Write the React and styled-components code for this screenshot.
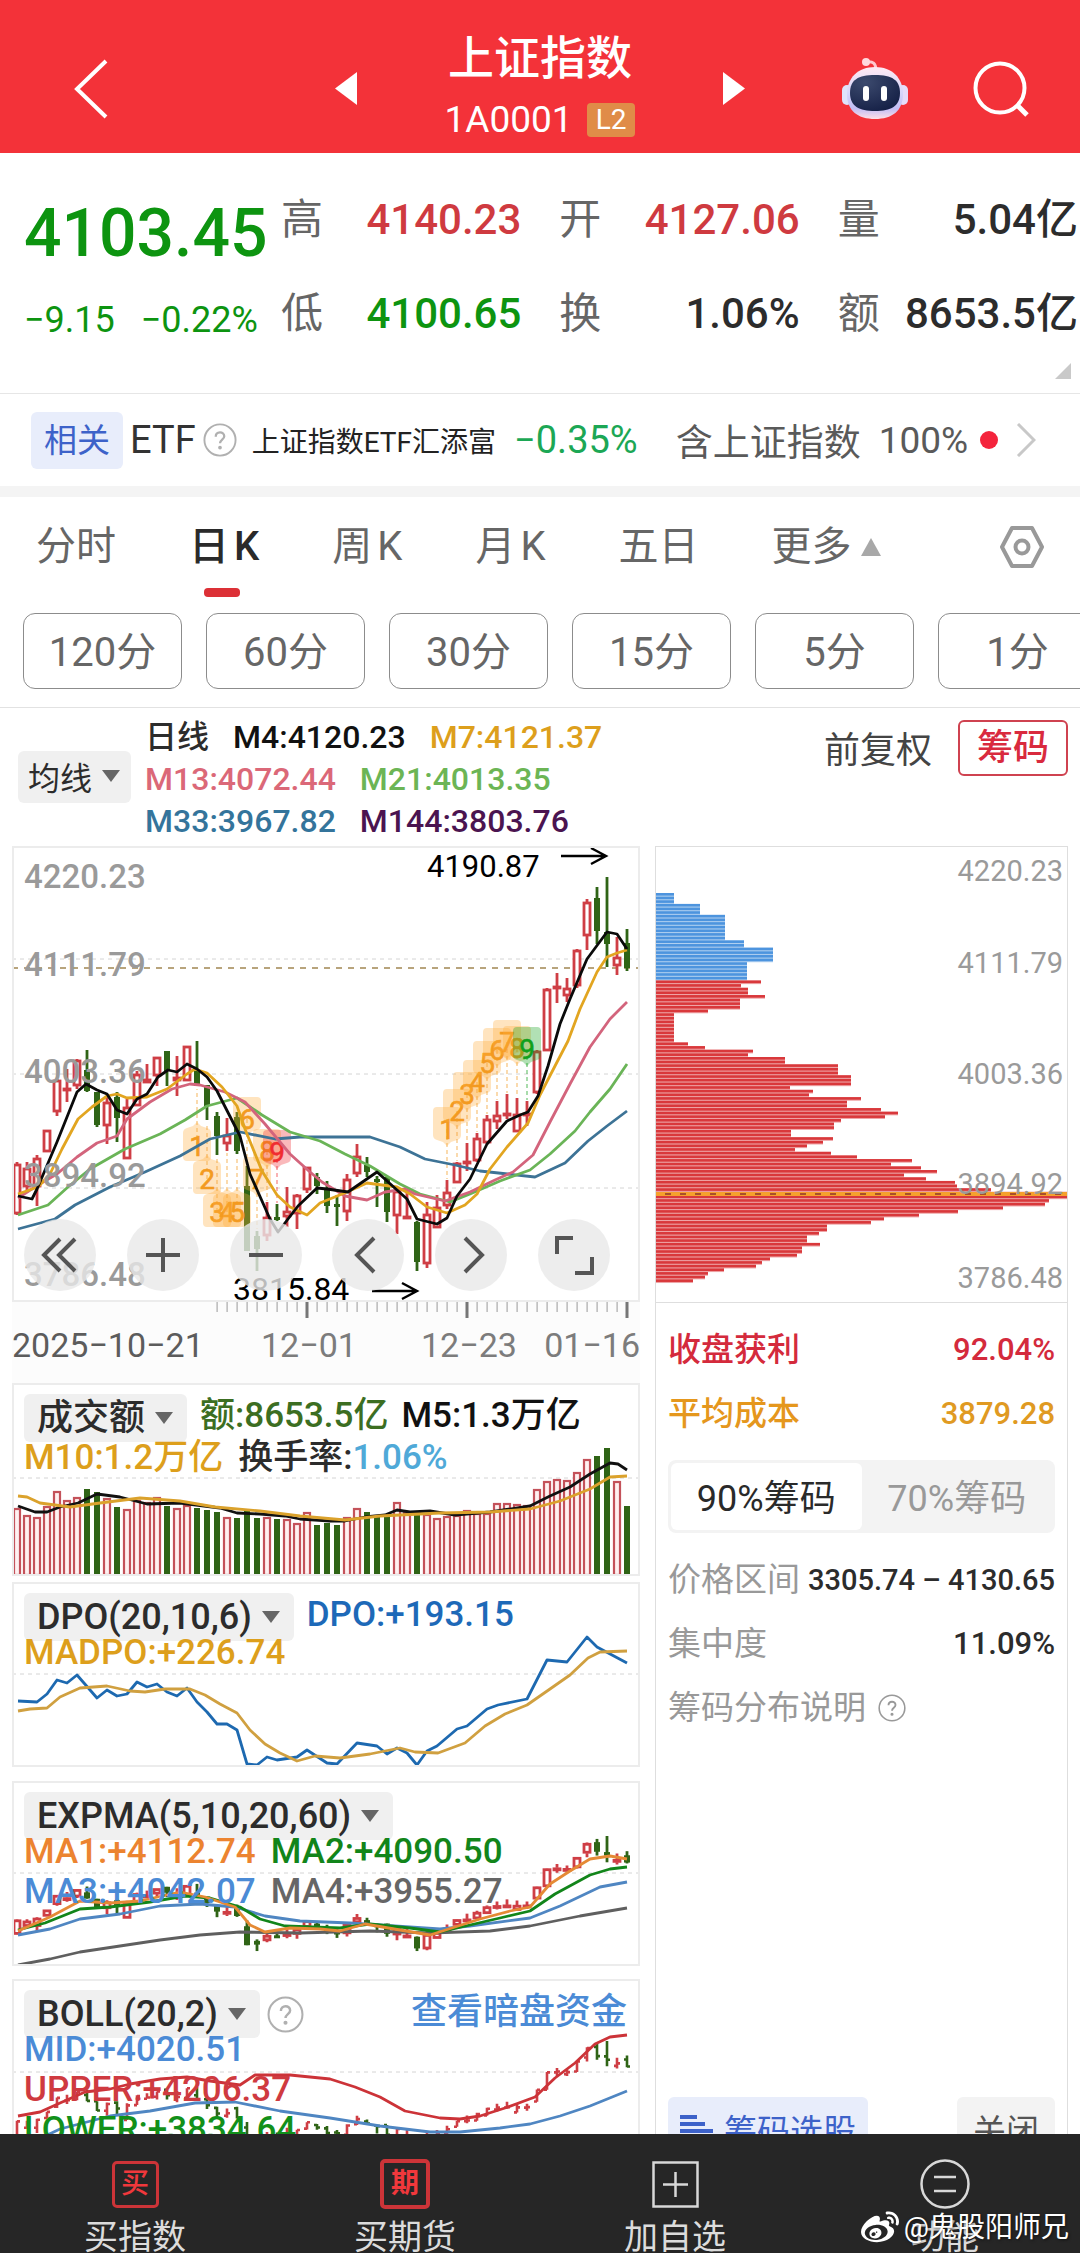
import React from "react";
import styled, { createGlobalStyle, css } from "styled-components";
import { FaWeibo } from "react-icons/fa";

const GlobalStyle = createGlobalStyle`
  *, *::before, *::after { box-sizing: border-box; }
  body {
    margin: 0;
    background: #fff;
    color: #333;
    font-family: Roboto, "Noto Sans CJK SC", sans-serif;
  }
  button {
    margin: 0;
    padding: 0;
    border: 0;
    background: none;
    color: inherit;
    font: inherit;
    cursor: pointer;
    white-space: nowrap;
  }
  a { color: inherit; text-decoration: none; }
  svg { display: block; }
  h1, p, dl, dt, dd { margin: 0; font-weight: inherit; }
`;

const RED = "#cf3a40";
const UP = "#cf3e45";
const DOWN = "#2f6416";

/* ---------- shell ---------- */

const Page = styled.div`
  position: relative;
  display: flex;
  flex-direction: column;
  height: 100vh;
  overflow: hidden;
`;

const Content = styled.main`
  flex: 1;
  min-height: 0;
  overflow: hidden;
`;

/* ---------- header ---------- */

const Header = styled.header`
  flex: none;
  display: grid;
  grid-template-columns: 1fr auto 1fr;
  align-items: center;
  height: 153px;
  padding: 26px 50px 2px;
  background: #f33239;
  color: #fff;
`;

const Back = styled.button`
  justify-self: start;
  padding-left: 22px;
`;

const Switcher = styled.div`
  display: flex;
  align-items: center;
  gap: 88px;
`;

const TitleBlock = styled.div`
  display: flex;
  flex-direction: column;
  align-items: center;
`;

const Title = styled.h1`
  font-size: 46px;
  line-height: 62px;
  font-weight: 500;
`;

const Code = styled.div`
  display: flex;
  align-items: center;
  gap: 14px;
  font-size: 37px;
  line-height: 62px;
`;

const Level = styled.span`
  padding: 0 9px;
  border-radius: 4px;
  background: #e08c48;
  font-size: 28px;
  line-height: 34px;
`;

const HeaderTools = styled.div`
  display: flex;
  justify-content: flex-end;
  align-items: center;
  gap: 65px;
`;

/* ---------- quote ---------- */

const Quote = styled.section`
  position: relative;
  display: flex;
  align-items: flex-start;
  padding: 20px 2px 20px 24px;
  border-bottom: 1px solid #e6e6e6;

  &::after {
    content: "";
    position: absolute;
    right: 9px;
    bottom: 14px;
    border-left: 16px solid transparent;
    border-bottom: 16px solid #c9c9c9;
  }
`;

const Last = styled.div`
  flex: none;
  width: 257px;
  padding-top: 28px;
  color: #0d9410;
`;

const Price = styled.p`
  font-size: 66px;
  line-height: 66px;
  font-weight: 500;
`;

const Change = styled.p`
  display: flex;
  gap: 26px;
  font-size: 36px;
  line-height: 106px;
`;

const Stats = styled.dl`
  flex: 1;
  display: grid;
  grid-template-columns: repeat(3, 1fr);
  column-gap: 38px;
`;

const Stat = styled.div`
  display: flex;
  justify-content: space-between;
  font-size: 42px;
  line-height: 94px;
  white-space: nowrap;

  dt { color: #666; }
  dd {
    color: ${(p) => p.$color || "#2c2c2c"};
    font-weight: 500;
  }
`;

/* ---------- related row ---------- */

const Related = styled.a`
  display: flex;
  align-items: center;
  height: 92px;
  padding: 0 38px 0 31px;
  white-space: nowrap;
`;

const RelatedTag = styled.span`
  margin-right: 7px;
  padding: 0 13px;
  border-radius: 6px;
  background: #e8edfb;
  color: #3d62c9;
  font-size: 33px;
  line-height: 57px;
`;

const Etf = styled.span`
  margin-right: 7px;
  font-size: 38px;
`;

const FundName = styled.span`
  margin: 0 18px 0 15px;
  color: #222;
  font-size: 28px;
`;

const FundChange = styled.span`
  margin-right: 38px;
  color: #1ca755;
  font-size: 38px;
`;

const Holding = styled.span`
  display: flex;
  align-items: center;
  gap: 18px;
  color: #5a5a5a;
  font-size: 37px;
`;

const Dot = styled.i`
  width: 18px;
  height: 18px;
  margin: 0 18px 0 12px;
  border-radius: 50%;
  background: #f4243c;
`;

const Band = styled.div`
  height: 11px;
  background: #f4f4f4;
`;

/* ---------- tabs ---------- */

const Tabs = styled.nav`
  display: flex;
  align-items: center;
  gap: 73px;
  height: 116px;
  padding: 0 36px 16px;
`;

const Tab = styled.button`
  position: relative;
  display: flex;
  align-items: center;
  gap: ${(p) => (p.$latin ? 5 : 9)}px;
  color: #666;
  font-size: 40px;
  line-height: 60px;

  ${(p) =>
    p.$active &&
    css`
      color: #2a2a2a;
      font-weight: 500;

      &::after {
        content: "";
        position: absolute;
        left: 50%;
        bottom: -20px;
        width: 36px;
        height: 9px;
        margin-left: -20px;
        border-radius: 4px;
        background: #dc3036;
      }
    `}
`;

const TabSettings = styled.button`
  margin-left: auto;
`;

const Periods = styled.div`
  display: flex;
  gap: 24px;
  padding: 0 0 18px 23px;
  overflow: hidden;
  border-bottom: 1px solid #e2e2e2;
`;

const Period = styled.button`
  flex: none;
  width: 159px;
  height: 76px;
  padding-bottom: 4px;
  border: 1px solid #8c8c8c;
  border-radius: 12px;
  color: #666;
  font-size: 40px;
`;

/* ---------- average lines legend ---------- */

const Averages = styled.section`
  display: flex;
  align-items: flex-start;
  height: 138px;
  padding: 8px 12px 0 18px;
`;

const Picker = styled.button`
  display: flex;
  align-items: center;
  gap: 10px;
  height: ${(p) => (p.$small ? 52 : 48)}px;
  padding: ${(p) => (p.$small ? "0 11px 2px 10px" : "0 14px 0 13px")};
  margin-top: ${(p) => (p.$small ? 35 : 0)}px;
  border-radius: 6px;
  background: #f0f0f0;
  color: #2c2c2c;
  font-size: ${(p) => (p.$small ? 32 : 36)}px;
`;

const AverageRows = styled.div`
  flex: 1;
  padding-left: 14px;
`;

const AverageRow = styled.div`
  display: flex;
  gap: 24px;
  font-size: 32px;
  font-weight: 500;
  line-height: 42px;
  white-space: nowrap;
`;

const Ink = styled.span`
  color: ${(p) => p.$c};
`;

const Adjust = styled.button`
  margin: 9px 26px 0 0;
  color: #444;
  font-size: 36px;
  line-height: 52px;
`;

const ChipToggle = styled.button`
  width: 110px;
  height: 56px;
  margin-top: 4px;
  border: 2px solid #cf4250;
  border-radius: 6px;
  color: #d92a3e;
  font-size: 36px;
  font-weight: 500;
  line-height: 50px;
`;

/* ---------- chart columns ---------- */

const Board = styled.div`
  display: grid;
  grid-template-columns: 628fr 413fr;
  gap: 15px;
  padding: 0 12px;
`;

const Column = styled.div`
  display: flex;
  flex-direction: column;
  min-width: 0;
`;

const Plot = styled.svg`
  width: 100%;
  height: auto;
  overflow: hidden;
`;

const MainChart = styled.section`
  position: relative;
  outline: 2px solid #ececec;
  outline-offset: -2px;
`;

const Controls = styled.div`
  position: absolute;
  left: 12px;
  right: 30px;
  bottom: 11px;
  display: flex;
  justify-content: space-between;
`;

const Round = styled.button`
  display: grid;
  place-items: center;
  width: 72px;
  height: 72px;
  border-radius: 50%;
  background: rgba(232, 232, 232, 0.8);
`;

const Ticks = styled.div`
  background: #fcfcfc;
`;

const Dates = styled.div`
  display: grid;
  grid-template-columns: 249fr 160fr 110fr 109fr;
  height: 65px;
  background: #fcfcfc;
  color: #7c7c7c;
  font-size: 34px;
  line-height: 54px;
  white-space: nowrap;

  span:first-child { color: #5c5c5c; }
  span:last-child { text-align: right; }
`;

const Indicator = styled.section`
  position: relative;
  margin-bottom: ${(p) => p.$gap}px;
  outline: 2px solid #ececec;
  outline-offset: -2px;
`;

const Legend = styled.div`
  position: absolute;
  left: 12px;
  right: 13px;
  top: 11px;
  font-size: 35px;
  font-weight: 500;
  white-space: nowrap;
`;

const LegendHead = styled.div`
  display: flex;
  align-items: flex-start;
  gap: 13px;
  line-height: 44px;
`;

const LegendRow = styled.div`
  display: flex;
  gap: 15px;
  margin-top: ${(p) => (p.$loose ? -4 : p.$first ? -8 : 0)}px;
  line-height: 40px;
`;

const DarkPool = styled.a`
  margin-left: auto;
  color: #4b8bd6;
  font-size: 36px;
`;

const HelpButton = styled.button`
  display: flex;
  align-self: center;
  margin-left: -6px;
`;

/* ---------- chip distribution ---------- */

const ChipPanel = styled(Column)`
  border: 1px solid #dedede;
`;

const ChipPlot = styled.div`
  border-bottom: 1px solid #dedede;
`;

const ChipInfo = styled.div`
  display: flex;
  flex-direction: column;
  flex: 1;
  padding: 15px 12px 0;
`;

const ChipRow = styled.div`
  display: flex;
  align-items: center;
  justify-content: space-between;
  color: ${(p) => p.$c || "#999"};
  font-size: 33px;
  font-weight: ${(p) => (p.$c ? 500 : 400)};
  line-height: 64px;
  white-space: nowrap;

  b {
    color: ${(p) => p.$v || "#2c2c2c"};
    font-size: ${(p) => (p.$tight ? 29 : 31)}px;
    font-weight: 500;
  }
`;

const Segments = styled.div`
  display: grid;
  grid-template-columns: 1fr 1fr;
  height: 73px;
  margin: 14px 0 15px;
  padding: 3px;
  border-radius: 8px;
  background: #f3f3f3;
`;

const Segment = styled.button`
  padding-bottom: 4px;
  border-radius: 6px;
  background: ${(p) => (p.$active ? "#fff" : "transparent")};
  color: ${(p) => (p.$active ? "#2a2a2a" : "#999")};
  font-size: 36px;
`;

const Explain = styled.button`
  display: flex;
  align-items: center;
  gap: 12px;
  color: #999;
  font-size: 33px;
  line-height: 64px;
`;

const ChipActions = styled.div`
  display: flex;
  justify-content: space-between;
  margin-top: auto;
`;

const ChipAction = styled.button`
  display: flex;
  align-items: center;
  gap: 11px;
  height: 66px;
  padding: 0 ${(p) => (p.$blue ? 12 : 16)}px 2px;
  border-radius: 6px;
  background: ${(p) => (p.$blue ? "#e8edfb" : "#f3f3f3")};
  color: ${(p) => (p.$blue ? "#3d62c9" : "#555")};
  font-size: 33px;
`;

/* ---------- bottom bar ---------- */

const BottomBar = styled.nav`
  flex: none;
  display: grid;
  grid-template-columns: repeat(4, 1fr);
  height: 119px;
  padding-top: 25px;
  overflow: hidden;
  background: #262626;
`;

const BottomItem = styled.button`
  display: flex;
  flex-direction: column;
  align-items: center;
  gap: 8px;
  color: #dcdcdc;
  font-size: 34px;
  line-height: 40px;
`;

const IconSlot = styled.span`
  display: grid;
  place-items: center;
  height: 50px;
`;

const Seal = styled.span`
  display: grid;
  place-items: center;
  width: ${(p) => (p.$bold ? 50 : 47)}px;
  height: ${(p) => (p.$bold ? 50 : 47)}px;
  border: ${(p) => (p.$bold ? 4 : 3)}px solid #cc3438;
  border-radius: 5px;
  color: #f0383c;
  font-size: 28px;
  line-height: 36px;
  font-weight: ${(p) => (p.$bold ? 700 : 500)};
`;

const Watermark = styled.div`
  position: absolute;
  right: 11px;
  bottom: 5px;
  display: flex;
  align-items: center;
  gap: 5px;
  color: #fff;
  font-size: 28px;
  line-height: 40px;
  text-shadow: 1px 1px 3px rgba(0, 0, 0, 0.6);
  pointer-events: none;
`;

/* ---------- data ---------- */

const AVERAGES = [
  [["日线", "#2c2c2c"], ["M4:4120.23", "#111"], ["M7:4121.37", "#dd9f1c"]],
  [["M13:4072.44", "#db6878"], ["M21:4013.35", "#6cb555"]],
  [["M33:3967.82", "#34749b"], ["M144:3803.76", "#4b1450"]],
];

// direction, body top, body bottom, wick top, wick bottom
const CANDLES = [
  [1, 1165, 1215, 1163, 1216], [1, 1169, 1188, 1163, 1192], [1, 1159, 1188, 1156, 1207],
  [1, 1131, 1153, 1131, 1153], [1, 1081, 1113, 1080, 1117], [1, 1089, 1092, 1070, 1103],
  [1, 1061, 1087, 1060, 1090], [0, 1071, 1092, 1051, 1093], [0, 1093, 1126, 1093, 1128],
  [1, 1103, 1127, 1098, 1145], [0, 1098, 1119, 1093, 1143], [1, 1108, 1160, 1100, 1160],
  [1, 1075, 1107, 1072, 1107], [1, 1080, 1084, 1065, 1084], [1, 1058, 1077, 1058, 1087],
  [0, 1052, 1072, 1052, 1087], [1, 1078, 1082, 1057, 1097], [1, 1047, 1082, 1047, 1082],
  [0, 1072, 1087, 1042, 1087], [0, 1086, 1107, 1086, 1121], [0, 1117, 1137, 1113, 1156],
  [1, 1136, 1145, 1119, 1152], [0, 1118, 1152, 1113, 1155], [0, 1187, 1252, 1167, 1252],
  [0, 1237, 1250, 1232, 1272], [1, 1218, 1237, 1203, 1242], [0, 1218, 1221, 1205, 1222],
  [1, 1212, 1218, 1188, 1228], [1, 1196, 1215, 1195, 1230], [1, 1168, 1191, 1168, 1194],
  [0, 1178, 1187, 1174, 1195], [0, 1190, 1207, 1182, 1214], [0, 1205, 1208, 1196, 1227],
  [1, 1180, 1213, 1175, 1222], [1, 1157, 1175, 1145, 1178], [0, 1166, 1173, 1158, 1178],
  [0, 1180, 1182, 1177, 1208], [0, 1178, 1213, 1178, 1223], [1, 1192, 1217, 1190, 1235],
  [1, 1217, 1220, 1190, 1220], [0, 1223, 1263, 1222, 1272], [1, 1215, 1265, 1203, 1269],
  [1, 1208, 1229, 1196, 1229], [1, 1193, 1207, 1181, 1210], [1, 1164, 1184, 1163, 1184],
  [1, 1162, 1164, 1144, 1172], [1, 1139, 1162, 1134, 1163], [1, 1120, 1144, 1116, 1145],
  [1, 1116, 1123, 1102, 1130], [1, 1114, 1116, 1095, 1120], [1, 1115, 1133, 1099, 1133],
  [1, 1114, 1116, 1102, 1127], [1, 1052, 1094, 1051, 1095], [1, 990, 1052, 989, 1052],
  [1, 987, 990, 974, 1004], [1, 989, 997, 979, 1003], [1, 951, 987, 950, 989],
  [1, 903, 937, 900, 951], [0, 899, 932, 888, 945], [0, 933, 945, 878, 968],
  [1, 958, 967, 938, 976], [0, 944, 969, 930, 972],
];

const VOLUME_TOPS = [
  1509, 1516, 1518, 1507, 1492, 1501, 1498, 1490, 1493, 1499,
  1508, 1510, 1501, 1503, 1498, 1507, 1509, 1506, 1509, 1511,
  1513, 1518, 1519, 1512, 1519, 1518, 1520, 1520, 1524, 1513,
  1526, 1524, 1526, 1518, 1509, 1513, 1517, 1516, 1503, 1513,
  1513, 1515, 1519, 1517, 1516, 1511, 1514, 1514, 1504, 1504,
  1505, 1506, 1490, 1482, 1480, 1481, 1473, 1460, 1457, 1449,
  1482, 1507,
];

const PRICE_LINES = [
  ["#3d7396", "18,1230 55,1220 75,1206 110,1188 145,1173 180,1157 210,1140 240,1133 275,1140 300,1138 370,1138 400,1148 425,1160 455,1166 480,1172 535,1178 565,1164 588,1142 607,1127 627,1112"],
  ["#6ab457", "18,1216 48,1206 68,1188 90,1170 125,1150 160,1135 185,1121 207,1107 237,1099 262,1116 290,1133 320,1142 345,1155 370,1167 400,1185 420,1195 450,1203 470,1195 500,1182 530,1171 550,1155 575,1132 590,1113 610,1090 627,1065"],
  ["#d3647c", "18,1199 38,1186 57,1175 77,1158 97,1144 117,1137 127,1120 150,1103 172,1090 190,1085 200,1086 225,1093 245,1103 265,1125 290,1155 310,1173 322,1183 345,1197 367,1201 385,1193 405,1190 415,1195 445,1202 470,1193 495,1181 513,1173 533,1156 550,1123 570,1085 590,1048 610,1020 627,1003"],
  ["#e2a520", "18,1195 38,1188 50,1175 62,1150 78,1120 92,1108 107,1097 117,1095 127,1099 147,1098 167,1090 187,1075 195,1070 207,1074 222,1088 237,1107 245,1130 262,1172 277,1196 290,1208 307,1216 320,1204 347,1193 367,1184 397,1188 410,1195 427,1208 447,1214 465,1206 477,1195 490,1170 507,1148 528,1124 540,1096 555,1067 568,1042 580,1010 597,973 607,958 617,954 627,951"],
  ["#0a0a0a", "18,1197 32,1200 37,1190 57,1143 77,1093 86,1085 97,1091 107,1095 117,1111 127,1115 137,1100 147,1095 158,1078 168,1071 177,1073 187,1065 197,1070 207,1078 217,1092 240,1137 250,1175 270,1220 278,1233 298,1207 317,1189 327,1190 348,1193 377,1173 407,1200 417,1220 437,1225 447,1219 457,1197 470,1180 487,1145 507,1122 520,1116 528,1113 538,1097 548,1067 560,1025 570,1000 587,960 607,933 617,935 627,950"],
];

const VOLUME_LINES = [
  ["#111", "18,1507 35,1513 47,1513 60,1508 78,1504 97,1495 120,1498 147,1505 180,1504 220,1509 237,1514 260,1515 285,1517 300,1520 330,1522 345,1522 365,1518 385,1516 397,1511 410,1513 430,1512 455,1516 490,1513 530,1507 550,1497 570,1488 590,1475 610,1464 618,1465 627,1471"],
  ["#dba22c", "18,1497 27,1498 40,1504 70,1508 100,1504 140,1499 180,1502 215,1508 260,1512 300,1517 345,1521 380,1517 400,1516 440,1514 490,1513 530,1510 560,1502 590,1490 610,1478 627,1477"],
];

const DPO_LINES = [
  ["#1d69b0", "18,1702 37,1703 47,1695 57,1681 67,1684 77,1676 97,1699 107,1691 117,1697 127,1695 137,1683 147,1688 157,1685 167,1693 177,1697 187,1689 197,1703 207,1713 217,1725 227,1725 237,1731 247,1765 257,1766 267,1758 277,1761 297,1758 307,1751 327,1764 337,1765 357,1744 377,1747 387,1755 397,1749 407,1754 417,1766 427,1752 437,1747 457,1730 467,1727 487,1710 498,1706 527,1700 547,1661 567,1663 587,1638 597,1648 627,1664"],
  ["#d0a040", "18,1712 30,1710 47,1709 60,1698 80,1689 107,1687 130,1692 145,1693 165,1690 190,1690 205,1696 220,1705 237,1714 250,1731 265,1745 280,1754 297,1762 315,1757 340,1759 370,1755 400,1749 415,1753 438,1754 465,1744 485,1727 505,1715 527,1706 550,1690 570,1676 588,1659 600,1653 627,1652"],
];

const EXPMA_LINES = [
  ["#5f5f5f", "18,1966 50,1960 80,1953 120,1947 160,1941 200,1936 240,1933 300,1934 370,1932 430,1934 490,1932 530,1927 580,1917 627,1909"],
  ["#4f86c2", "18,1936 50,1930 80,1920 120,1915 160,1907 200,1905 235,1908 265,1917 300,1922 350,1924 410,1928 440,1930 470,1927 530,1919 560,1907 600,1888 627,1883"],
  ["#12851a", "18,1931 45,1924 80,1910 110,1908 150,1903 185,1897 210,1899 240,1908 260,1920 285,1927 340,1929 370,1925 410,1929 440,1933 470,1926 500,1919 530,1912 555,1895 590,1876 610,1870 627,1868"],
  ["#e58a35", "18,1932 50,1918 80,1902 110,1904 140,1902 180,1893 205,1898 235,1908 250,1926 265,1933 290,1929 320,1930 340,1932 365,1925 400,1931 430,1936 455,1928 480,1920 510,1912 530,1908 550,1885 570,1872 590,1860 610,1857 627,1860"],
];

const BOLL_LINES = [
  ["#4f86c2", "18,2150 60,2130 110,2117 150,2112 195,2104 235,2103 280,2112 330,2119 380,2127 430,2133 460,2133 500,2129 530,2125 560,2117 590,2107 627,2092"],
  ["#cc3338", "18,2117 40,2113 60,2104 85,2093 110,2090 130,2085 160,2080 187,2078 210,2082 240,2086 255,2076 290,2076 330,2080 355,2088 380,2098 405,2112 420,2115 440,2119 460,2120 480,2117 505,2109 535,2098 555,2079 575,2064 595,2045 610,2038 627,2036"],
];

// digit, x, y, colour, stem end
const ORANGE = "#f39a20";
const SETUP_DOWN = [
  ["1", 197, 1147, ORANGE, 1090], ["2", 207, 1180, ORANGE, 1124], ["3", 217, 1213, ORANGE, 1158],
  ["4", 227, 1213, ORANGE, 1154], ["5", 237, 1213, ORANGE, 1157], ["6", 247, 1120, ORANGE, 1166],
  ["7", 257, 1180, ORANGE, 1230], ["8", 267, 1152, ORANGE, 1202], ["9", 277, 1153, "#f02c30", 1204],
];
const SETUP_UP = [
  ["1", 447, 1130, ORANGE, 1180], ["2", 457, 1112, ORANGE, 1162], ["3", 467, 1095, ORANGE, 1143],
  ["4", 477, 1083, ORANGE, 1133], ["5", 487, 1064, ORANGE, 1115], ["6", 497, 1051, ORANGE, 1101],
  ["7", 507, 1043, ORANGE, 1094], ["8", 517, 1049, ORANGE, 1098], ["9", 527, 1050, "#12a01c", 1101],
];

// [bar width, number of consecutive bars]
const CHIPS_ABOVE = [[18, 3], [44, 3], [69, 7], [88, 2], [117, 4], [91, 5]];
const CHIPS_BELOW = [
  [105, 1], [85, 1], [92, 2], [109, 1], [84, 3], [52, 1], [18, 8], [32, 1], [49, 1], [97, 1],
  [92, 1], [129, 2], [182, 3], [195, 3], [134, 1], [157, 1], [153, 1], [205, 1], [191, 2],
  [225, 1], [242, 1], [229, 1], [185, 1], [178, 2], [135, 2], [177, 1], [167, 1], [151, 1],
  [139, 1], [175, 1], [201, 1], [256, 1], [235, 1], [265, 1], [281, 1], [248, 1], [270, 1],
  [299, 1], [301, 1], [335, 1], [411, 2], [393, 1], [389, 1], [347, 1], [302, 1], [263, 1],
  [228, 1], [215, 1], [171, 2], [163, 1], [151, 2], [164, 1], [146, 2], [141, 1], [114, 1],
  [106, 1], [100, 1], [68, 1], [52, 1], [49, 1], [37, 1],
];
const expand = (runs) => runs.flatMap(([w, n]) => Array(n).fill(w));
const CHIPS = [
  ...expand(CHIPS_ABOVE).map((w) => [w, "#4d94de"]),
  ...expand(CHIPS_BELOW).map((w) => [w, "#d9383b"]),
];

/* ---------- drawings ---------- */

const slotX = (i) => 17 + i * 10;

const Lines = ({ lines, width = 2.8 }) =>
  lines.map(([c, pts]) => (
    <polyline key={c} points={pts} fill="none" stroke={c} strokeWidth={width} strokeLinejoin="round" />
  ));

const Guide = ({ y }) => (
  <line x1="12" x2="640" y1={y} y2={y} stroke="#d4d4d4" strokeWidth="1" strokeDasharray="4 4" />
);

const Candles = ({ y = (v) => v }) =>
  CANDLES.map(([up, t, b, h, l], i) => {
    const x = slotX(i);
    const top = y(t);
    const height = Math.max(y(b) - top, 3);
    return up ? (
      <g key={i} stroke={UP} strokeWidth="2.8">
        <path d={`M${x} ${y(h)}V${top}M${x} ${top + height}V${Math.max(y(l), top + height)}`} />
        <rect x={x - 3} y={top + 1} width="6" height={Math.max(height - 2, 1)} fill="#fff" />
      </g>
    ) : (
      <g key={i} fill={DOWN}>
        <rect x={x - 1.4} y={y(h)} width="2.8" height={y(l) - y(h)} />
        <rect x={x - 3} y={top} width="6" height={height} />
      </g>
    );
  });

const Bars = ({ y }) =>
  CANDLES.map(([up, t, b, h, l], i) => {
    const x = slotX(i);
    const open = y(up ? b : t);
    const close = y(up ? t : b);
    return (
      <path
        key={i}
        d={`M${x} ${y(h)}V${y(l)}M${x - 3} ${open}H${x}M${x} ${close}H${x + 3}`}
        stroke={up ? UP : DOWN}
        strokeWidth="2.6"
      />
    );
  });

const Marks = ({ items, tipUp }) =>
  items.map(([n, x, y, c, end]) => (
    <g key={n}>
      <line x1={x} x2={x} y1={y} y2={end} stroke={c} strokeWidth="1.2" strokeDasharray="4 3" opacity="0.6" />
      <path
        d={
          tipUp && n < 6
            ? `M${x - 14} ${y - 13}q0 -4 4 -5l6 -2l4 -4l4 4l6 2q4 1 4 5v24q0 4 -4 4h-20q-4 0 -4 -4z`
            : `M${x - 14} ${y - 18}q0 -4 4 -4h20q4 0 4 4v24q0 4 -4 5l-6 2l-4 4l-4 -4l-6 -2q-4 -1 -4 -5z`
        }
        fill={c === ORANGE ? "#ffac3c" : c}
        opacity="0.33"
      />
      <text x={x} y={y + 10} textAnchor="middle" fontSize="28" fill={c} stroke={c} strokeWidth="0.6">
        {n}
      </text>
    </g>
  ));

const ArrowRight = ({ x, y }) => (
  <path d={`M${x} ${y}H${x + 45}M${x + 30} ${y - 8}L${x + 45} ${y}L${x + 30} ${y + 8}`} fill="none" stroke="#000" strokeWidth="2.4" />
);

const Caret = ({ up }) => (
  <svg width={up ? 20 : 18} height={up ? 18 : 12} viewBox="0 0 20 14" preserveAspectRatio="none" aria-hidden="true">
    <path d={up ? "M10 0L20 14H0Z" : "M0 0H20L10 14Z"} fill={up ? "#a8a8a8" : "#666"} />
  </svg>
);

const Help = ({ size, color = "#b0b0b0" }) => (
  <svg width={size} height={size} viewBox="0 0 36 36" fill="none" stroke={color} strokeWidth="2" aria-hidden="true">
    <circle cx="18" cy="18" r="16.5" />
    <path d="M13.5 14.5c0-6 9-6 9-.5c0 3.500-4.500 3.800-4.500 7.500" strokeWidth="2.4" />
    <circle cx="18" cy="26" r="1" fill={color} />
  </svg>
);

const Robot = () => (
  <svg width="66" height="64" viewBox="0 0 66 64" aria-hidden="true">
    <defs>
      <linearGradient id="shell" x1="0" y1="0" x2="0" y2="1">
        <stop offset="0" stopColor="#ffe9f3" />
        <stop offset="0.5" stopColor="#d6d6fb" />
        <stop offset="0.8" stopColor="#c2bdf5" />
        <stop offset="1" stopColor="#ffdfe6" />
      </linearGradient>
      <radialGradient id="visor" cx="0.3" cy="0.2" r="0.9">
        <stop offset="0" stopColor="#3c4a6e" />
        <stop offset="1" stopColor="#141f45" />
      </radialGradient>
    </defs>
    <path d="M24 5c7-1 10 1 10 9" fill="none" stroke="#ffc7cf" strokeWidth="3" />
    <circle cx="24" cy="5" r="4" fill="#ffd8de" />
    <rect x="0" y="28" width="10" height="20" rx="5" fill="#dfe3fb" />
    <rect x="56" y="28" width="10" height="20" rx="5" fill="#e6dcfa" />
    <path d="M33 10C50 10 61 21 61 37C61 54 50 62 33 62S5 54 5 37C5 21 16 10 33 10Z" fill="url(#shell)" />
    <path d="M33 18C50 18 58 23 58 36C58 49 49 54 33 54S8 49 8 36C8 23 16 18 33 18Z" fill="url(#visor)" />
    <rect x="21" y="29" width="6" height="15" rx="3" fill="#fff" />
    <rect x="39" y="29" width="6" height="15" rx="3" fill="#fff" />
  </svg>
);

const CONTROLS = [
  ["最早", "M36 20L20 36L36 52M51 20L35 36L51 52"],
  ["放大", "M19 36H53M36 19V53"],
  ["缩小", "M19 36H53"],
  ["向左", "M42 19L25 36L42 53"],
  ["向右", "M30 19L47 36L30 53"],
  ["全屏", "M19 35V19H35M54 38V54H37"],
];

const AXIS = ["4220.23", "4111.79", "4003.36", "3894.92", "3786.48"];
const AxisText = ({ x, ys, size, anchor, weight }) => (
  <g fill="#9a9a9a" fontSize={size} fontWeight={weight} textAnchor={anchor}>
    {AXIS.map((t, i) => (
      <text key={t} x={x} y={ys[i]}>{t}</text>
    ))}
  </g>
);

function PriceChart() {
  return (
    <MainChart aria-label="日K线图">
      <Plot viewBox="12 847 628 456">
        <Guide y={960} />
        <Guide y={1075} />
        <Guide y={1189} />
        <line x1="12" x2="640" y1="969" y2="969" stroke="#b8a47c" strokeWidth="2" strokeDasharray="6 6" />
        <Candles />
        <Marks items={SETUP_DOWN} tipUp />
        <Marks items={SETUP_UP} />
        <Lines lines={PRICE_LINES} />
        <AxisText x={24} ys={[889, 977, 1084, 1188, 1287]} size={33} weight={500} anchor="start" />
        <text x="427" y="878" fontSize="31">4190.87</text>
        <text x="233" y="1301" fontSize="32">3815.84</text>
        <ArrowRight x={561} y={857} />
        <ArrowRight x={372} y={1292} />
      </Plot>
      <Controls>
        {CONTROLS.map(([label, d]) => (
          <Round key={label} type="button" aria-label={label}>
            <svg width="72" height="72" viewBox="0 0 72 72" fill="none" stroke="#555" strokeWidth="4">
              <path d={d} />
            </svg>
          </Round>
        ))}
      </Controls>
    </MainChart>
  );
}

function TimeAxis() {
  const ticks = Array.from({ length: 42 }, (_, i) => 217 + i * 10);
  return (
    <>
      <Ticks>
        <Plot viewBox="12 1303 628 16" aria-hidden="true">
          {ticks.map((x) => {
            const major = (x - 307) % 160 === 0;
            return (
              <rect key={x} x={x - (major ? 1.5 : 0.5)} y="1303" width={major ? 3 : 1.2} height={major ? 16 : 10} fill={major ? "#777" : "#aaa"} />
            );
          })}
        </Plot>
      </Ticks>
      <Dates>
        <span>2025−10−21</span>
        <span>12−01</span>
        <span>12−23</span>
        <span>01−16</span>
      </Dates>
    </>
  );
}

function VolumeChart() {
  return (
    <Indicator $gap={6}>
      <Plot viewBox="12 1384 628 193">
        <Guide y={1479} />
        {VOLUME_TOPS.map((t, i) =>
          CANDLES[i][0] ? (
            <rect key={i} x={slotX(i) - 3} y={t + 1} width="6" height={1575 - t} fill="#fff1f1" stroke="#c4525a" strokeWidth="2.2" />
          ) : (
            <rect key={i} x={slotX(i) - 3} y={t} width="6" height={1576 - t} fill={DOWN} />
          )
        )}
        <Lines lines={VOLUME_LINES} />
      </Plot>
      <Legend>
        <LegendHead>
          <Picker type="button">成交额<Caret /></Picker>
          <Ink $c="#3c6e22">额:8653.5亿</Ink>
          <Ink $c="#111">M5:1.3万亿</Ink>
        </LegendHead>
        <LegendRow $loose>
          <Ink $c="#dd9f1c">M10:1.2万亿</Ink>
          <Ink $c="#2c2c2c">换手率:<Ink $c="#4fa9d8">1.06%</Ink></Ink>
        </LegendRow>
      </Legend>
    </Indicator>
  );
}

function DpoChart() {
  return (
    <Indicator $gap={14}>
      <Plot viewBox="12 1583 628 185">
        <Guide y={1675} />
        <Lines lines={DPO_LINES} />
      </Plot>
      <Legend>
        <LegendHead>
          <Picker type="button">DPO(20,10,6)<Caret /></Picker>
          <Ink $c="#1d69b8">DPO:+193.15</Ink>
        </LegendHead>
        <LegendRow $first>
          <Ink $c="#dd9f1c">MADPO:+226.74</Ink>
        </LegendRow>
      </Legend>
    </Indicator>
  );
}

function ExpmaChart() {
  return (
    <Indicator $gap={13}>
      <Plot viewBox="12 1782 628 185">
        <Guide y={1874} />
        <Candles y={(v) => 1837 + (v - 878) * 0.292} />
        <Lines lines={EXPMA_LINES} />
      </Plot>
      <Legend>
        <LegendHead>
          <Picker type="button">EXPMA(5,10,20,60)<Caret /></Picker>
        </LegendHead>
        <LegendRow $first>
          <Ink $c="#ec8430">MA1:+4112.74</Ink>
          <Ink $c="#12851a">MA2:+4090.50</Ink>
        </LegendRow>
        <LegendRow>
          <Ink $c="#4b8bd6">MA3:+4042.07</Ink>
          <Ink $c="#666">MA4:+3955.27</Ink>
        </LegendRow>
      </Legend>
    </Indicator>
  );
}

function BollChart() {
  return (
    <Indicator $gap={0}>
      <Plot viewBox="12 1980 628 185">
        <Guide y={2073} />
        <Bars y={(v) => 2042 + (v - 878) * 0.28} />
        <Lines lines={BOLL_LINES} />
      </Plot>
      <Legend>
        <LegendHead>
          <Picker type="button">BOLL(20,2)<Caret /></Picker>
          <HelpButton type="button" aria-label="指标说明"><Help size={37} /></HelpButton>
          <DarkPool href="#dark-pool">查看暗盘资金</DarkPool>
        </LegendHead>
        <LegendRow $first><Ink $c="#4b8bd6">MID:+4020.51</Ink></LegendRow>
        <LegendRow><Ink $c={RED}>UPPER:+4206.37</Ink></LegendRow>
        <LegendRow><Ink $c="#12901a">LOWER:+3834.64</Ink></LegendRow>
      </Legend>
    </Indicator>
  );
}

function ChipDistribution() {
  return (
    <ChipPanel>
      <ChipPlot>
        <Plot viewBox="656 847 411 455" aria-label="筹码分布">
          {CHIPS.map(([w, c], i) => (
            <g key={i} fill={c}>
              <rect x="656" y={893 + i * 3.645} width={w} height="3.645" opacity="0.45" />
              <rect x="656" y={893 + i * 3.645} width={w} height="2.6" />
            </g>
          ))}
          <rect x="656" y="1192" width="411" height="4" fill="#f5a02c" />
          <line x1="665" x2="1067" y1="1194" y2="1194" stroke="#a8502a" strokeWidth="2" strokeDasharray="6 9" />
          <AxisText x={1063} ys={[881, 973, 1084, 1194, 1288]} size={29} anchor="end" />
        </Plot>
      </ChipPlot>
      <ChipInfo>
        <ChipRow $c="#d42a3c" $v="#d42a3c">收盘获利<b>92.04%</b></ChipRow>
        <ChipRow $c="#e5971d" $v="#e09a22">平均成本<b>3879.28</b></ChipRow>
        <Segments>
          <Segment type="button" $active>90%筹码</Segment>
          <Segment type="button">70%筹码</Segment>
        </Segments>
        <ChipRow $tight>价格区间<b>3305.74 – 4130.65</b></ChipRow>
        <ChipRow>集中度<b>11.09%</b></ChipRow>
        <Explain type="button">筹码分布说明<Help size={28} color="#999" /></Explain>
        <ChipActions>
          <ChipAction type="button" $blue>
            <svg width="33" height="30" viewBox="0 0 33 30" fill="#3d62c9" aria-hidden="true">
              <path d="M0 1H17V5H0ZM0 8H25V12H0ZM0 15H33V19H0ZM0 22H21V26H0Z" />
            </svg>
            筹码选股
          </ChipAction>
          <ChipAction type="button">关闭</ChipAction>
        </ChipActions>
      </ChipInfo>
    </ChipPanel>
  );
}

const STATS = [
  ["高", "4140.23", RED],
  ["开", "4127.06", RED],
  ["量", "5.04亿"],
  ["低", "4100.65", "#0d9410"],
  ["换", "1.06%"],
  ["额", "8653.5亿"],
];

export default function App() {
  return (
    <Page>
      <GlobalStyle />
      <Header>
        <Back type="button" aria-label="返回">
          <svg width="36" height="60" viewBox="0 0 36 60" fill="none" stroke="#fff" strokeWidth="4">
            <path d="M34 2L5 30L34 58" />
          </svg>
        </Back>
        <Switcher>
          <button type="button" aria-label="上一个">
            <svg width="22" height="33" viewBox="0 0 22 33" fill="#fff"><path d="M22 0V33L0 16.500Z" /></svg>
          </button>
          <TitleBlock>
            <Title>上证指数</Title>
            <Code>1A0001<Level>L2</Level></Code>
          </TitleBlock>
          <button type="button" aria-label="下一个">
            <svg width="22" height="33" viewBox="0 0 22 33" fill="#fff"><path d="M0 0V33L22 16.500Z" /></svg>
          </button>
        </Switcher>
        <HeaderTools>
          <button type="button" aria-label="智能助手"><Robot /></button>
          <button type="button" aria-label="搜索">
            <svg width="57" height="56" viewBox="0 0 57 56" fill="none" stroke="#fff" strokeWidth="4">
              <circle cx="27" cy="27" r="24.500" />
              <path d="M44 44L54 54" strokeWidth="5" />
            </svg>
          </button>
        </HeaderTools>
      </Header>

      <Content>
        <Quote>
          <Last>
            <Price>4103.45</Price>
            <Change><span>−9.15</span><span>−0.22%</span></Change>
          </Last>
          <Stats>
            {STATS.map(([k, v, c]) => (
              <Stat key={k} $color={c}><dt>{k}</dt><dd>{v}</dd></Stat>
            ))}
          </Stats>
        </Quote>

        <Related href="#etf">
          <RelatedTag>相关</RelatedTag>
          <Etf>ETF</Etf>
          <Help size={34} />
          <FundName>上证指数ETF汇添富</FundName>
          <FundChange>−0.35%</FundChange>
          <Holding><span>含上证指数</span><span>100%</span></Holding>
          <Dot />
          <svg width="20" height="34" viewBox="0 0 20 34" fill="none" stroke="#c8c8c8" strokeWidth="3" aria-hidden="true">
            <path d="M2 1L18 17L2 33" />
          </svg>
        </Related>
        <Band />

        <Tabs>
          <Tab type="button">分时</Tab>
          <Tab type="button" $latin $active>日<span>K</span></Tab>
          <Tab type="button" $latin>周<span>K</span></Tab>
          <Tab type="button" $latin>月<span>K</span></Tab>
          <Tab type="button">五日</Tab>
          <Tab type="button">更多<Caret up /></Tab>
          <TabSettings type="button" aria-label="设置">
            <svg width="44" height="42" viewBox="0 0 44 42" fill="none" stroke="#999" strokeWidth="4" strokeLinejoin="round">
              <path d="M12 2H32L42 21L32 40H12L2 21Z" />
              <circle cx="22" cy="21" r="6.500" />
            </svg>
          </TabSettings>
        </Tabs>

        <Periods>
          {["120分", "60分", "30分", "15分", "5分", "1分"].map((p) => (
            <Period key={p} type="button">{p}</Period>
          ))}
        </Periods>

        <Averages>
          <Picker type="button" $small>均线<Caret /></Picker>
          <AverageRows>
            {AVERAGES.map((row, i) => (
              <AverageRow key={i}>
                {row.map(([t, c]) => <Ink key={t} $c={c}>{t}</Ink>)}
              </AverageRow>
            ))}
          </AverageRows>
          <Adjust type="button">前复权</Adjust>
          <ChipToggle type="button">筹码</ChipToggle>
        </Averages>

        <Board>
          <Column>
            <PriceChart />
            <TimeAxis />
            <VolumeChart />
            <DpoChart />
            <ExpmaChart />
            <BollChart />
          </Column>
          <ChipDistribution />
        </Board>
      </Content>

      <BottomBar>
        <BottomItem type="button"><IconSlot><Seal>买</Seal></IconSlot>买指数</BottomItem>
        <BottomItem type="button"><IconSlot><Seal $bold>期</Seal></IconSlot>买期货</BottomItem>
        <BottomItem type="button">
          <IconSlot>
            <svg width="47" height="47" viewBox="0 0 47 47" fill="none" stroke="#d8d8d8" strokeWidth="2.500">
              <path d="M1.500 1.500H45.500V45.500H1.500ZM11 23.500H36M23.500 11V36" />
            </svg>
          </IconSlot>
          加自选
        </BottomItem>
        <BottomItem type="button">
          <IconSlot>
            <svg width="50" height="50" viewBox="0 0 50 50" fill="none" stroke="#d8d8d8" strokeWidth="2.500">
              <circle cx="25" cy="25" r="23.500" />
              <path d="M14 18H36M14 32H36" />
            </svg>
          </IconSlot>
          功能
        </BottomItem>
      </BottomBar>

      <Watermark><FaWeibo size={38} aria-hidden="true" />@鬼股阳师兄</Watermark>
    </Page>
  );
}
